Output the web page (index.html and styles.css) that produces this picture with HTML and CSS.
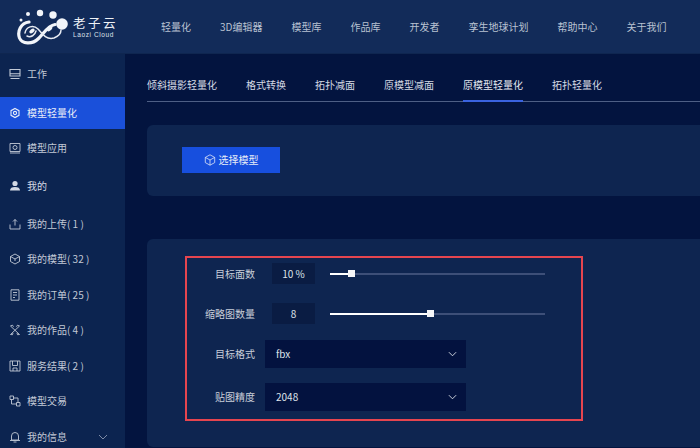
FILE: index.html
```html
<!DOCTYPE html>
<html lang="zh-CN">
<head>
<meta charset="utf-8">
<title>老子云</title>
<link rel="stylesheet" href="styles.css">
</head>
<body>
<div class="app">
  <header class="topbar">
    <div class="logo">
      <svg class="logo-mark" viewBox="16 6 54 42">
        <path class="logo-thick" d="M29 22C21 23 17 31 19.500 38C22 44 32 45 38.500 38.500C44 33 48 25.500 55 24.500"/>
        <path class="logo-thin" d="M25 33C26 27 33 24 38 29C43 35 47 40 54 38C59 36 61 33 61 30"/>
        <path class="logo-thin" d="M27 36C31 38 35 35 36 31"/>
        <ellipse class="logo-dot" cx="32" cy="31" rx="3" ry="1.900" transform="rotate(-35 32 31)"/>
        <ellipse class="logo-dot" cx="49.500" cy="28.500" rx="3.300" ry="2.100" transform="rotate(-45 49.500 28.500)"/>
        <circle class="logo-dot" cx="62" cy="24" r="5.800"/>
        <circle class="logo-dot" cx="53" cy="15" r="3.700"/>
        <circle class="logo-dot" cx="40" cy="13" r="3.200"/>
        <circle class="logo-dot" cx="28" cy="14" r="2"/>
        <circle class="logo-dot" cx="21" cy="20" r="1.500"/>
      </svg>
      <div class="logo-text">
        <div class="logo-cn">老子云</div>
        <div class="logo-en">Laozi Cloud</div>
      </div>
    </div>
    <nav class="topnav">
      <a>轻量化</a><a>3D编辑器</a><a>模型库</a><a>作品库</a><a>开发者</a><a>孪生地球计划</a><a>帮助中心</a><a>关于我们</a>
    </nav>
  </header>
  <div class="body">
    <aside class="sidebar">
      <div class="side-item side-first">
        <svg class="ico ico-bold" viewBox="0 0 12 12"><path d="M1 1.500h10v6.500H1zM1 5.800h10M1.500 10.500h9"/></svg>工作
      </div>
      <div class="side-item active">
        <svg class="ico ico-bold" viewBox="0 0 12 12"><path d="M6 1.500l4 2.200v4.600l-4 2.200-4-2.200V3.700z"/><circle cx="6" cy="6" r="1.600"/></svg>模型轻量化
      </div>
      <div class="side-item side-app">
        <svg class="ico" viewBox="0 0 12 12"><path d="M1 1.500h10v8H1zM1 11h10"/><circle cx="6" cy="5.500" r="2"/></svg>模型应用
      </div>
      <div class="side-item side-mine">
        <svg class="ico" viewBox="0 0 12 12"><circle class="solid" cx="6" cy="3.500" r="2.600"/><path class="solid" d="M1 10.500c0-2.500 2-3.500 5-3.500s5 1 5 3.500z"/></svg>我的
      </div>
      <div class="side-item">
        <svg class="ico" viewBox="0 0 12 12"><path d="M6 7.500V1.500M4 3.500l2-2 2 2M1 6.500v4.500h10V6.500"/></svg>我的上传( 1 )
      </div>
      <div class="side-item">
        <svg class="ico" viewBox="0 0 12 12"><path d="M6 1l4.500 2.500v5L6 11 1.500 8.500v-5zM1.500 3.500L6 6l4.500-2.500M6 6v2"/></svg>我的模型( 32 )
      </div>
      <div class="side-item">
        <svg class="ico" viewBox="0 0 12 12"><path d="M2 .8h8v10.400H2zM4 3.500h4M4 6h4M4 8.500h2"/></svg>我的订单( 25 )
      </div>
      <div class="side-item">
        <svg class="ico" viewBox="0 0 12 12"><path d="M1.500 2l9 8.500M10.500 2l-9 8.500M1.500 2l2-.8 1 1.500M10.500 2l-2-.8-1 1.500M1.500 10.500l2 .2.500-1.700M10.500 10.500l-2 .2-.500-1.700"/></svg>我的作品( 4 )
      </div>
      <div class="side-item">
        <svg class="ico" viewBox="0 0 12 12"><path d="M1 1h10v10H1zM3.500 1v4.500h5V1M4 11V8h4v3"/></svg>服务结果( 2 )
      </div>
      <div class="side-item">
        <svg class="ico" viewBox="0 0 12 12"><path d="M1 1h3.500v3.500H1zM7.500 7.500H11V11H7.500zM4.500 3H9v4.500M2.500 4.500V9h5"/></svg>模型交易
      </div>
      <div class="side-item">
        <svg class="ico" viewBox="0 0 12 12"><path d="M2.500 9V5a3.500 3.500 0 0 1 7 0v4zM1 9.500h10M4.500 11h3"/></svg>我的信息
        <svg class="side-chev" viewBox="0 0 10 6"><path d="M1 1l4 4 4-4"/></svg>
      </div>
    </aside>
    <main class="main">
      <div class="tabs">
        <a>倾斜摄影轻量化</a><a>格式转换</a><a>拓扑减面</a><a>原模型减面</a><a class="on">原模型轻量化</a><a>拓扑轻量化</a>
      </div>
      <section class="card card-pick">
        <button class="btn">
          <svg class="btn-ico" viewBox="0 0 12 12"><path d="M6 .8l4.700 2.600v5.200L6 11.200 1.300 8.600V3.400zM1.300 3.400L6 6l4.700-2.600M6 6v5.200"/></svg>选择模型
        </button>
      </section>
      <section class="card card-form">
        <div class="form-box">
          <div class="row row-a">
            <span class="label">目标面数</span>
            <span class="value">10 %</span>
            <span class="slider"><i class="fill fill-10"></i><b class="thumb"></b></span>
          </div>
          <div class="row row-b">
            <span class="label">缩略图数量</span>
            <span class="value">8</span>
            <span class="slider"><i class="fill fill-46"></i><b class="thumb"></b></span>
          </div>
          <div class="row row-c">
            <span class="label">目标格式</span>
            <span class="select">fbx<svg class="chev" viewBox="0 0 10 6"><path d="M1 1l4 4 4-4"/></svg></span>
          </div>
          <div class="row row-d">
            <span class="label">贴图精度</span>
            <span class="select">2048<svg class="chev" viewBox="0 0 10 6"><path d="M1 1l4 4 4-4"/></svg></span>
          </div>
        </div>
      </section>
    </main>
  </div>
</div>
</body>
</html>
```
FILE: styles.css
```css
* { box-sizing: border-box; }
html, body { margin: 0; padding: 0; }
body {
  width: 700px;
  height: 448px;
  overflow: hidden;
  background: #03143f;
  color: #d4d9e4;
  font-family: "Noto Sans CJK SC", "Noto Sans", sans-serif;
  font-size: 10px;
  line-height: 14px;
}
.app { width: 700px; height: 448px; display: flex; flex-direction: column; }

.topbar {
  height: 54px;
  flex: none;
  display: flex;
  align-items: center;
  padding-left: 16px;
  background: #122b59;
  border-bottom: 1px solid #0f2650;
}
.logo { width: 145px; display: flex; align-items: center; flex: none; }
.logo-mark { flex: none; width: 54px; height: 42px; margin-right: 3px; }
.logo-thick { fill: none; stroke: #f2f5fa; stroke-width: 3.200; stroke-linecap: round; }
.logo-thin { fill: none; stroke: #e6eaf2; stroke-width: 1.500; stroke-linecap: round; }
.logo-dot { fill: #f2f5fa; }
.logo-cn { font-size: 12.500px; line-height: 15px; letter-spacing: 2.500px; color: #eef1f6; }
.logo-en { font-family: "Liberation Sans", sans-serif; font-size: 6.500px; line-height: 9px; letter-spacing: .6px; color: #dfe4ec; }
.topnav { display: flex; gap: 29px; color: #b9c2d2; }

.body { flex: 1; display: flex; min-height: 0; }

.sidebar { width: 125px; flex: none; background: #0c2450; overflow: hidden; }
.side-item { height: 35.500px; display: flex; align-items: center; padding-left: 9px; color: #c2c9d6; position: relative; }
.side-first { height: 38px; padding-top: 2px; }
.side-item.active { height: 32px; margin-top: 5px; background: #1a50da; color: #e8edf8; }
.side-app { height: 38px; }
.side-mine { height: 39px; padding-bottom: 2px; color: #d4d9e4; }
.ico { width: 12px; height: 12px; margin-right: 6px; flex: none; fill: none; stroke: currentColor; stroke-width: .9; }
.ico-bold { stroke-width: 1.100; }
.ico .solid { fill: currentColor; stroke: none; }
.side-chev { width: 10px; height: 6px; position: absolute; left: 98px; top: 15px; fill: none; stroke: #7e8ba6; stroke-width: 1; }

.main { flex: 1; min-width: 0; padding-left: 22px; }
.tabs {
  height: 48px;
  display: flex;
  gap: 29px;
  padding-top: 24px;
  border-bottom: 1px solid #4e5f85;
  color: #d4d9e4;
}
.tabs a { height: 24px; white-space: nowrap; }
.tabs .on { border-bottom: 2px solid #3a63e0; color: #e4e8f0; }

.card { background: #0e2550; border-radius: 6px 0 0 6px; }
.card-pick { height: 71px; margin-top: 23px; padding: 22px 0 0 35px; }
.card-form { height: 208px; margin-top: 43px; padding: 17px 0 0 38px; }

.btn {
  width: 98px;
  height: 26px;
  display: flex;
  align-items: center;
  justify-content: center;
  padding: 0;
  border: 0;
  background: #174fde;
  color: #e6ebf7;
  font: inherit;
}
.btn-ico { width: 12px; height: 12px; margin-right: 3px; fill: none; stroke: #dfe6f6; stroke-width: .8; }

.form-box { width: 398px; height: 165px; border: 2px solid #e5454f; padding: 5px 0 0 0; }
.row { display: flex; align-items: center; }
.label { width: 68px; flex: none; text-align: right; color: #c8ced9; white-space: nowrap; }
.row-a, .row-b { height: 21px; }
.row-a { margin-bottom: 19px; }
.row-b { margin-bottom: 16px; }
.row-c { height: 28px; margin-bottom: 15px; }
.row-d { height: 28px; }
.value {
  width: 43px;
  height: 21px;
  margin: 0 15px 0 17px;
  flex: none;
  background: #0a1c43;
  color: #dfe3ea;
  text-align: center;
  line-height: 21px;
}
.slider { width: 215px; height: 2px; background: #3d4f78; position: relative; display: block; }
.fill { display: block; height: 2px; background: #fff; }
.fill-10 { width: 21px; }
.fill-46 { width: 100px; }
.thumb { position: absolute; top: -3px; width: 7px; height: 7px; background: #f5f6f8; margin-left: -3px; }
.fill-10 + .thumb { left: 21px; }
.fill-46 + .thumb { left: 100px; }
.select {
  width: 201px;
  height: 28px;
  margin-left: 10px;
  padding: 0 9px 0 11px;
  display: flex;
  align-items: center;
  justify-content: space-between;
  background: #03123f;
  color: #dfe3ea;
}
.chev { width: 9px; height: 6px; fill: none; stroke: #dfe3ea; stroke-width: 1; }
```
